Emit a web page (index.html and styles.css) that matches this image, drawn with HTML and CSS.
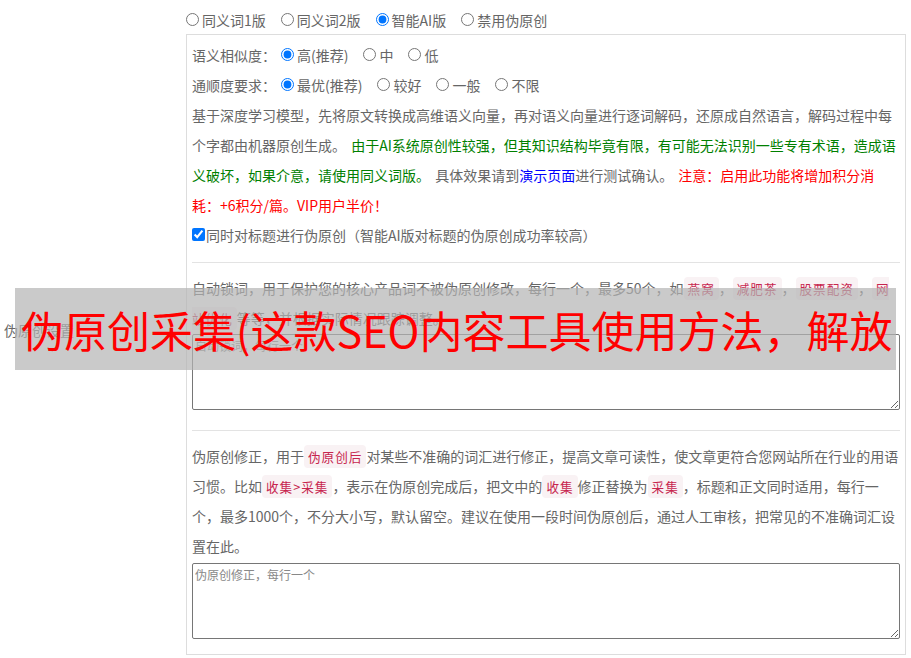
FILE: index.html
```html
<!DOCTYPE html>
<html lang="zh-CN">
<head>
<meta charset="utf-8">
<title>伪原创设置</title>
<link rel="stylesheet" href="styles.css">
</head>
<body>
<div class="page">
  <div class="label-cell">伪原创设置</div>
  <div class="main">
    <div class="versions"><label class="opt"><input type="radio" name="ver">同义词1版</label><label class="opt"><input type="radio" name="ver">同义词2版</label><label class="opt"><input type="radio" name="ver" checked>智能AI版</label><label class="opt"><input type="radio" name="ver">禁用伪原创</label></div>
    <div class="box">
      <div class="sec sec-ai">
        <div class="line"><span class="lbl">语义相似度：</span><label class="opt"><input type="radio" name="sim" checked>高(推荐)</label><label class="opt"><input type="radio" name="sim">中</label><label class="opt"><input type="radio" name="sim">低</label></div>
        <div class="line"><span class="lbl">通顺度要求：</span><label class="opt"><input type="radio" name="flu" checked>最优(推荐)</label><label class="opt"><input type="radio" name="flu">较好</label><label class="opt"><input type="radio" name="flu">一般</label><label class="opt"><input type="radio" name="flu">不限</label></div>
        <p class="desc">基于深度学习模型，先将原文转换成高维语义向量，再对语义向量进行逐词解码，还原成自然语言，解码过程中每个字都由机器原创生成。 <span class="green">由于AI系统原创性较强，但其知识结构毕竟有限，有可能无法识别一些专有术语，造成语义破坏，如果介意，请使用同义词版。</span> 具体效果请到<a class="link" href="#">演示页面</a>进行测试确认。 <span class="red">注意：启用此功能将增加积分消耗：+6积分/篇。VIP用户半价！</span></p>
        <div class="line"><label class="chk"><input type="checkbox" checked>同时对标题进行伪原创（智能AI版对标题的伪原创成功率较高）</label></div>
      </div>
      <div class="sec sec-lock">
        <p class="desc">自动锁词，用于保护您的核心产品词不被伪原创修改，每行一个，最多50个，如<code>燕窝</code>，<code>减肥茶</code>，<code>股票配资</code>，<code>网站优化</code>等等，并根据实际情况跟踪调整。</p>
        <textarea class="ta" placeholder="自动锁词，每行一个"></textarea>
      </div>
      <div class="sec sec-fix">
        <p class="desc">伪原创修正，用于<code>伪原创后</code>对某些不准确的词汇进行修正，提高文章可读性，使文章更符合您网站所在行业的用语习惯。比如<code>收集&gt;采集</code>，表示在伪原创完成后，把文中的<code>收集</code>修正替换为<code>采集</code>，标题和正文同时适用，每行一个，最多1000个，不分大小写，默认留空。建议在使用一段时间伪原创后，通过人工审核，把常见的不准确词汇设置在此。</p>
        <textarea class="ta" placeholder="伪原创修正，每行一个"></textarea>
      </div>
    </div>
  </div>
</div>
<div class="banner">伪原创采集(这款SEO内容工具使用方法，解放</div>
</body>
</html>
```

FILE: styles.css
```css
html, body {
  margin: 0;
  padding: 0;
  background: #fff;
}

body {
  font-family: "Noto Sans CJK SC", "Noto Sans", sans-serif;
  font-size: 14px;
  color: #666;
  text-autospace: no-autospace;
  text-spacing-trim: space-all;
}

.page {
  display: grid;
  grid-template-columns: 186px 720px;
}

.label-cell {
  display: flex;
  align-items: center;
  padding: 4px 0 0 4px;
  line-height: 20px;
}

.versions {
  height: 34px;
  padding-top: 6px;
  box-sizing: border-box;
  line-height: 28px;
  white-space: nowrap;
}

.opt {
  margin-right: 15px;
}

.opt input[type="radio"] {
  margin: 3px 3px 0 0;
}

.lbl {
  margin-right: 5px;
}

.box {
  border: 1px solid #ddd;
  padding: 0 5px;
}

.sec + .sec {
  border-top: 1px solid #e3e3e3;
}

.sec-ai {
  padding: 5px 0 12px;
}

.sec-lock {
  padding: 10px 0 20px;
}

.sec-fix {
  padding: 10px 0 15px;
}

.line {
  line-height: 30px;
  white-space: nowrap;
}

.chk input[type="checkbox"] {
  margin: 3px 1px 0 0;
}

.desc {
  margin: 0;
  line-height: 30px;
  word-spacing: 2px;
}

.green {
  color: #008000;
}

.red {
  color: #ff0000;
}

.link {
  color: #0000ff;
  text-decoration: none;
}

.desc code {
  font-family: "Noto Sans CJK SC", sans-serif;
  font-size: 12.6px;
  line-height: 16px;
  letter-spacing: 1px;
  padding: 2px 4px;
  border-radius: 4px;
  color: #c7254e;
  background: #f9f2f4;
  word-spacing: 0;
}

.ta {
  display: block;
  width: 100%;
  height: 76px;
  box-sizing: border-box;
  margin: 1px 0 0;
  padding: 2px;
  border: 1px solid #767676;
  border-radius: 2px;
  font-family: "Noto Sans CJK SC", sans-serif;
  font-size: 12px;
  color: #333;
}

.sec-fix .ta {
  margin-top: 2px;
}

.ta::placeholder {
  color: #888;
}

.banner {
  position: absolute;
  left: 15px;
  top: 288px;
  width: 881px;
  height: 82px;
  box-sizing: border-box;
  padding-left: 6px;
  background: rgba(180, 180, 180, 0.7);
  color: #ff0000;
  font-family: "Noto Sans CJK SC", sans-serif;
  font-size: 43px;
  line-height: 82px;
  white-space: nowrap;
  overflow: hidden;
}
```
